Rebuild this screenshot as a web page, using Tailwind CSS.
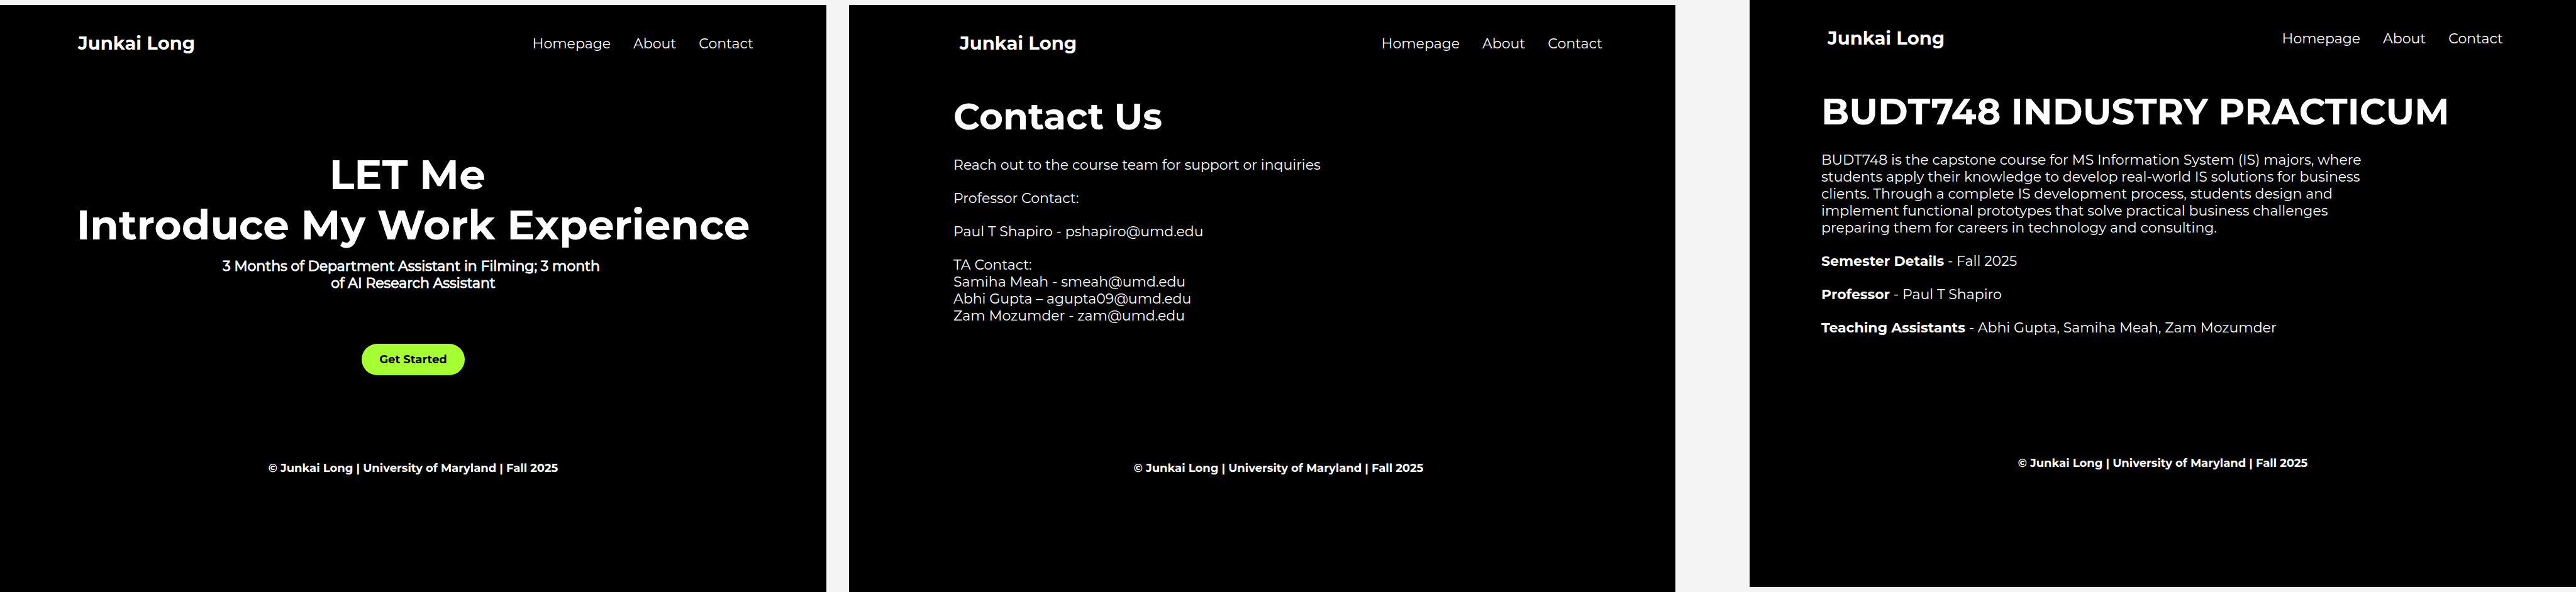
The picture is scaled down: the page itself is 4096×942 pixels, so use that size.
<!DOCTYPE html>
<html lang="en">
<head>
<meta charset="utf-8">
<meta name="viewport" content="width=device-width, initial-scale=1">
<title>Junkai Long</title>
<script src="https://cdn.jsdelivr.net/npm/@tailwindcss/browser@4"></script>
</head>
<body class="flex min-h-screen bg-[#f4f4f4] font-[Montserrat,Inter,sans-serif] text-[22px] leading-[27px] text-white">

  <!-- Homepage -->
  <section class="mt-2 mr-9 flex min-w-0 flex-1 flex-col bg-black pb-[186px]">
    <header class="flex items-center justify-between pt-[43px] pr-[116px] pl-[124px]">
      <a href="#" class="text-[29px] leading-9 font-bold">Junkai Long</a>
      <nav class="flex gap-9">
        <a href="#">Homepage</a>
        <a href="#">About</a>
        <a href="#">Contact</a>
      </nav>
    </header>
    <main class="flex grow flex-col items-center pt-[151px] text-center">
      <h1 class="text-[66px] leading-[80px] font-bold">LET Me&nbsp;<br>Introduce My Work Experience</h1>
      <p class="mt-3 [-webkit-text-stroke:1px_white]">3 Months of Department Assistant in Filming; 3 month&nbsp;<br>of AI Research Assistant</p>
      <button type="button" class="mt-[83px] rounded-full bg-[#a6ff33] px-7 py-3 text-[18px] leading-[26px] font-bold text-black">Get Started</button>
    </main>
    <footer class="text-center text-[18px] leading-[22px] font-bold">© Junkai Long | University of Maryland | Fall 2025</footer>
  </section>

  <!-- Contact -->
  <section class="mt-2 mr-[118px] flex min-w-0 flex-1 flex-col bg-black pb-[186px]">
    <header class="flex items-center justify-between pt-[43px] pr-[116px] pl-[176px]">
      <a href="#" class="text-[29px] leading-9 font-bold">Junkai Long</a>
      <nav class="flex gap-9">
        <a href="#">Homepage</a>
        <a href="#">About</a>
        <a href="#">Contact</a>
      </nav>
    </header>
    <main class="flex grow flex-col pt-16 pl-[166px]">
      <h1 class="text-[58px] leading-[70px] font-bold">Contact Us</h1>
      <div class="mt-7 flex flex-col gap-[26px]">
        <p>Reach out to the course team for support or inquiries</p>
        <p>Professor Contact:</p>
        <p>Paul T Shapiro - pshapiro@umd.edu</p>
        <p>TA Contact:<br>Samiha Meah - smeah@umd.edu<br>Abhi Gupta – agupta09@umd.edu<br>Zam Mozumder - zam@umd.edu</p>
      </div>
    </main>
    <footer class="pl-[52px] text-center text-[18px] leading-[22px] font-bold">© Junkai Long | University of Maryland | Fall 2025</footer>
  </section>

  <!-- About -->
  <section class="mb-2 flex min-w-0 flex-1 flex-col bg-black pb-[186px]">
    <header class="flex items-center justify-between pt-[43px] pr-[116px] pl-[124px]">
      <a href="#" class="text-[29px] leading-9 font-bold">Junkai Long</a>
      <nav class="flex gap-9">
        <a href="#">Homepage</a>
        <a href="#">About</a>
        <a href="#">Contact</a>
      </nav>
    </header>
    <main class="flex grow flex-col pt-16 pl-[114px]">
      <h1 class="text-[58px] leading-[70px] font-bold">BUDT748 INDUSTRY PRACTICUM</h1>
      <div class="mt-7 flex max-w-[864px] flex-col gap-[26px]">
        <p>BUDT748 is the capstone course for MS Information System (IS) majors, where students apply their knowledge to develop real-world IS solutions for business clients. Through a complete IS development process, students design and implement functional prototypes that solve practical business challenges preparing them for careers in technology and consulting.</p>
        <p><strong class="font-bold">Semester Details</strong> - Fall 2025</p>
        <p><strong class="font-bold">Professor</strong> - Paul T Shapiro</p>
        <p><strong class="font-bold">Teaching Assistants</strong> - Abhi Gupta, Samiha Meah, Zam Mozumder</p>
      </div>
    </main>
    <footer class="text-center text-[18px] leading-[22px] font-bold">© Junkai Long | University of Maryland | Fall 2025</footer>
  </section>

</body>
</html>
